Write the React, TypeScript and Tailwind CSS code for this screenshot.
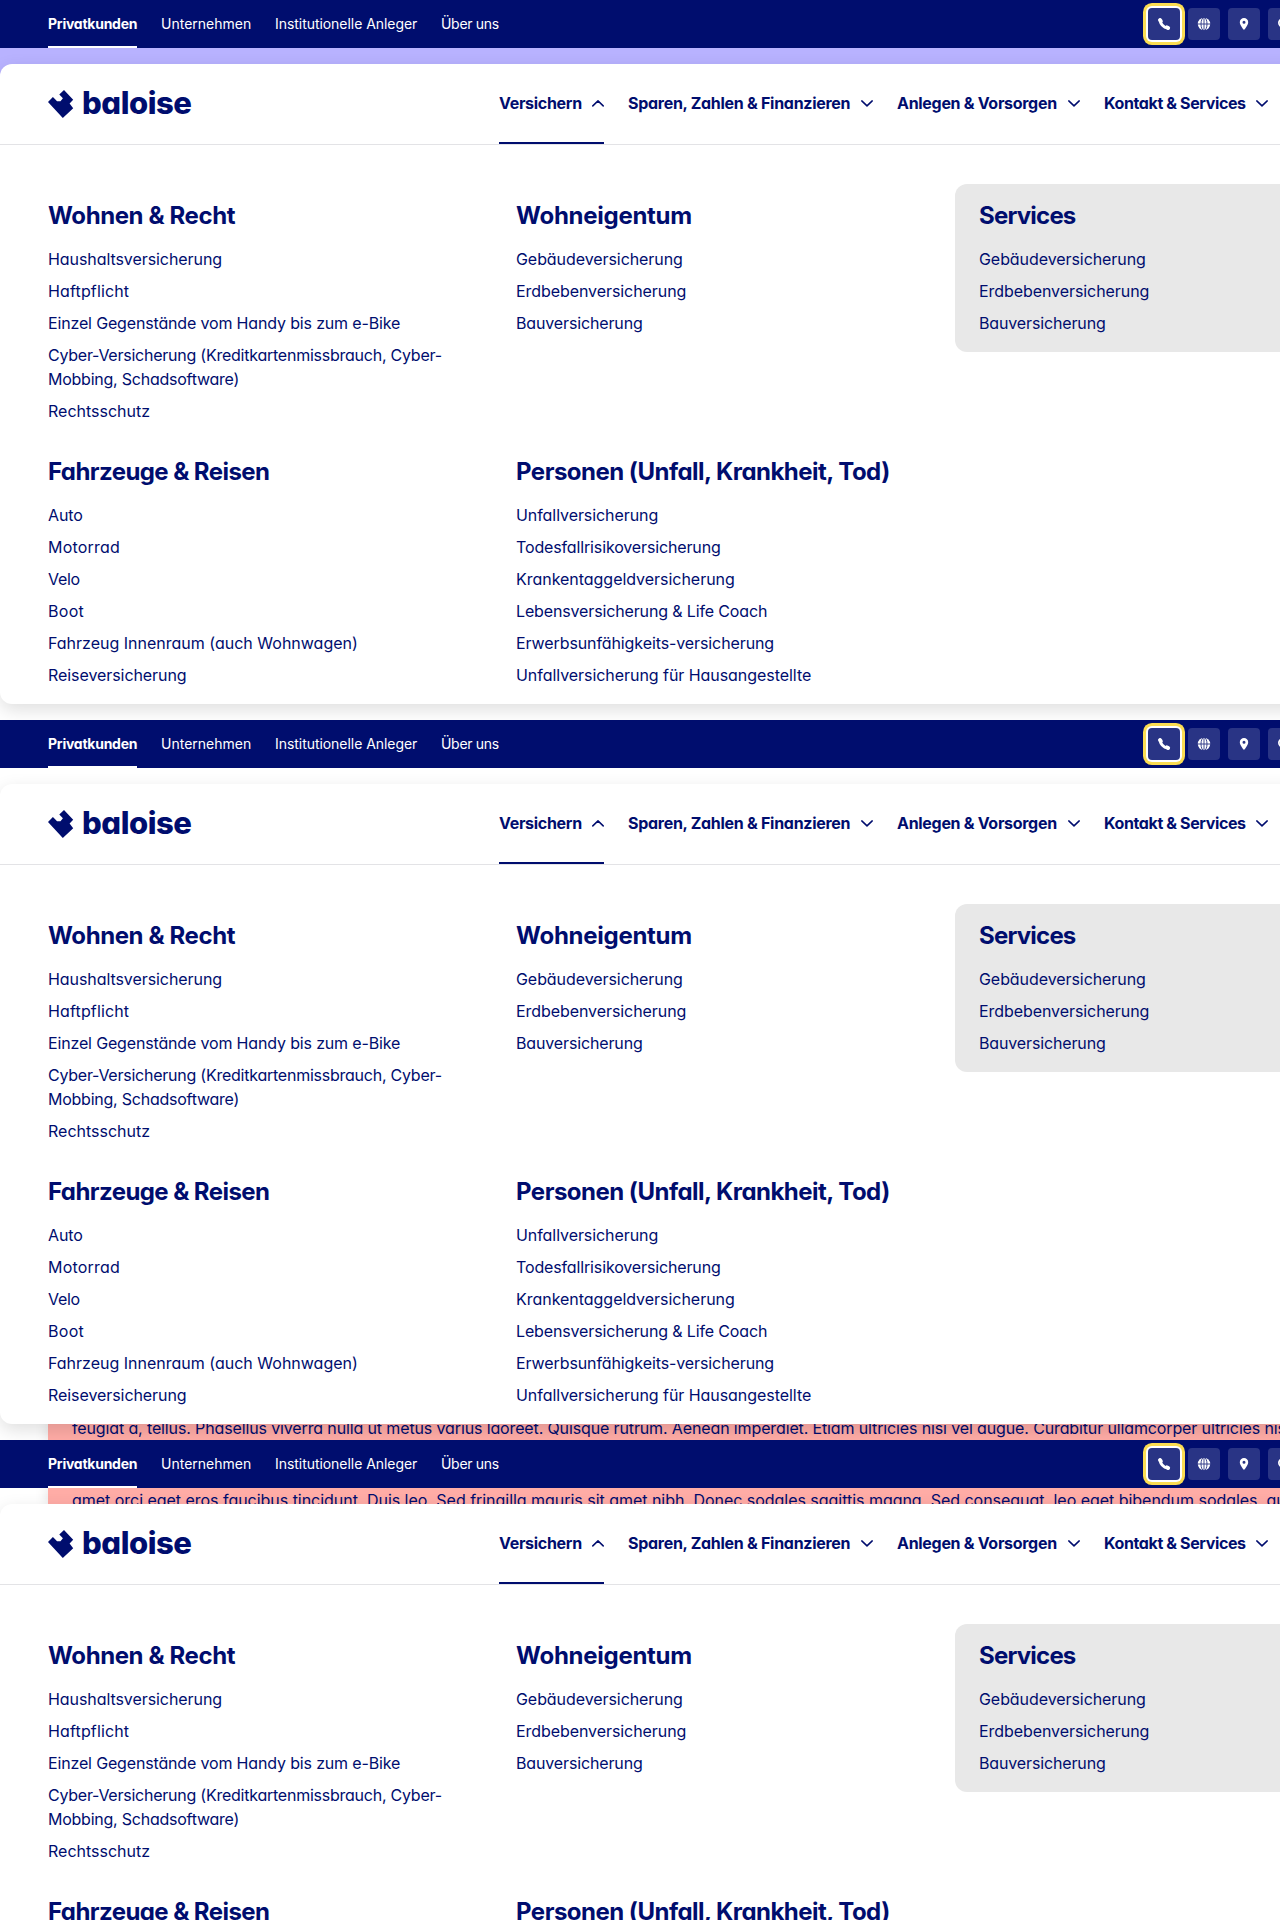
import React from "react";

type Link = { label: string; cls?: string };
type Group = { title: string; titleCls: string; links: Link[] };

const leftGroups: Group[] = [
  {
    title: "Wohnen & Recht",
    titleCls: "tracking-[-0.4px]",
    links: [
      { label: "Haushaltsversicherung" },
      { label: "Haftpflicht", cls: "tracking-[0.15px]" },
      { label: "Einzel Gegenstände vom Handy bis zum e-Bike", cls: "tracking-[-0.16px]" },
      {
        label: "Cyber-Versicherung (Kreditkartenmissbrauch, Cyber-Mobbing, Schadsoftware)",
        cls: "tracking-[-0.24px]",
      },
      { label: "Rechtsschutz", cls: "tracking-normal" },
    ],
  },
  {
    title: "Fahrzeuge & Reisen",
    titleCls: "tracking-[-0.57px]",
    links: [
      { label: "Auto" },
      { label: "Motorrad", cls: "tracking-[0.2px]" },
      { label: "Velo", cls: "tracking-[-0.3px]" },
      { label: "Boot", cls: "tracking-[0.3px]" },
      { label: "Fahrzeug Innenraum (auch Wohnwagen)", cls: "tracking-normal" },
      { label: "Reiseversicherung" },
    ],
  },
];

const middleGroups: Group[] = [
  {
    title: "Wohneigentum",
    titleCls: "tracking-[-0.27px]",
    links: [
      { label: "Gebäudeversicherung" },
      { label: "Erdbebenversicherung" },
      { label: "Bauversicherung", cls: "tracking-[-0.14px]" },
    ],
  },
  {
    title: "Personen (Unfall, Krankheit, Tod)",
    titleCls: "tracking-[-0.51px]",
    links: [
      { label: "Unfallversicherung" },
      { label: "Todesfallrisikoversicherung", cls: "tracking-[-0.14px]" },
      { label: "Krankentaggeldversicherung", cls: "tracking-[-0.03px]" },
      { label: "Lebensversicherung & Life Coach", cls: "tracking-[-0.14px]" },
      { label: "Erwerbsunfähigkeits-versicherung", cls: "tracking-[-0.1px]" },
      { label: "Unfallversicherung für Hausangestellte", cls: "tracking-[-0.05px]" },
    ],
  },
];

const services: Group = {
  title: "Services",
  titleCls: "tracking-[-0.8px]",
  links: [
    { label: "Gebäudeversicherung" },
    { label: "Erdbebenversicherung" },
    { label: "Bauversicherung", cls: "tracking-[-0.14px]" },
  ],
};

const metaItems = [
  { label: "Privatkunden", cls: "w-[89px] font-bold tracking-[-0.25px] border-b-2 border-white pt-px" },
  { label: "Unternehmen", cls: "w-[90px] pb-px" },
  { label: "Institutionelle Anleger", cls: "w-[142px] pb-px tracking-[-0.05px]" },
  { label: "Über uns", cls: "w-[60px] pb-px tracking-[-0.3px]" },
];

const navItems = [
  { label: "Versichern", cls: "w-[105px] border-[#000d6e] tracking-[-0.3px]", open: true },
  { label: "Sparen, Zahlen & Finanzieren", cls: "w-[245px] border-transparent tracking-[-0.28px]", open: false },
  { label: "Anlegen & Vorsorgen", cls: "w-[183px] border-transparent tracking-[-0.3px]", open: false },
  { label: "Kontakt & Services", cls: "w-[164px] border-transparent tracking-[-0.38px]", open: false },
];

function Logo() {
  return (
    <div className="flex h-20 w-[150px] items-center">
      <svg className="h-[30px] w-[26px] shrink-0" viewBox="0 0 26 30" fill="#000d6e">
        <path d="M16 .9 25.200 10.700 21.600 14.500 25.200 19.200 14.800 28.900 0 13 4.900 8 9.100 12.300 12.500 12.300 14.900 9.300 11.300 5.600Z" />
      </svg>
      <span className="mb-[3px] ml-[8px] text-[31px] leading-none font-extrabold tracking-[-0.45px]">baloise</span>
    </div>
  );
}

function Chevron({ up }: { up: boolean }) {
  return (
    <svg className="h-3 w-3 shrink-0" viewBox="0 0 12 12" fill="none" stroke="#000d6e" strokeWidth="1.5" strokeLinecap="round" strokeLinejoin="round">
      <path d={up ? "M.8 8.900 6 3.900 11.200 8.900" : "M.8 3.900 6 8.900 11.200 3.900"} />
    </svg>
  );
}

function IconButton({ focused, children }: { focused?: boolean; children: React.ReactNode }) {
  return (
    <div
      className={
        focused
          ? "flex size-8 shrink-0 items-center justify-center rounded-[4px] bg-[#293485] shadow-[0_0_0_2px_#fff,0_0_0_5px_#fbdc52]"
          : "flex size-8 shrink-0 items-center justify-center rounded-[4px] bg-[#293485]"
      }
    >
      <svg className="size-4" viewBox="0 0 16 16" fill="#fff">
        {children}
      </svg>
    </div>
  );
}

function TopBar() {
  return (
    <div className="relative z-20 flex h-12 shrink-0 justify-between overflow-hidden bg-[#000d6e] pl-12 text-white">
      <div className="flex gap-6">
        {metaItems.map((m) => (
          <div key={m.label} className={`flex h-12 items-center text-[14px] whitespace-nowrap ${m.cls}`}>
            <span>{m.label}</span>
          </div>
        ))}
      </div>
      <div className="flex w-[132px] items-center gap-2">
        <IconButton focused>
          <g fill="none" stroke="#fff" strokeLinecap="round">
            <path d="M3.900 4C4.600 8.200 7.600 11.300 11.900 12.200" strokeWidth="2.800" />
            <path d="M4 4 4.900 5.200M11 11.300 12.200 12" strokeWidth="3.800" />
          </g>
        </IconButton>
        <IconButton>
          <circle cx="8" cy="8" r="6.200" />
          <g fill="none" stroke="#293485" strokeWidth="0.9">
            <ellipse cx="8" cy="8" rx="3" ry="6.600" />
            <path d="M8 1.500V14.500M1.500 8H14.500" />
          </g>
        </IconButton>
        <IconButton>
          <path fillRule="evenodd" d="M8 2a4.200 4.200 0 0 0-4.200 4.200C3.800 9.300 8 14 8 14s4.200-4.700 4.200-7.800A4.200 4.200 0 0 0 8 2Zm0 2.700a1.500 1.500 0 1 1 0 3 1.500 1.500 0 0 1 0-3Z" />
        </IconButton>
        <IconButton>
          <path fillRule="evenodd" d="M6.800 2a4.800 4.800 0 1 1 0 9.600 4.800 4.800 0 0 1 0-9.600Zm0 1.800a3 3 0 1 0 0 6 3 3 0 0 0 0-6Z" />
        </IconButton>
      </div>
    </div>
  );
}

function LinkGroup({ group }: { group: Group }) {
  return (
    <div className="py-4">
      <h3 className={`mb-[15px] text-[24px] leading-8 font-bold whitespace-nowrap ${group.titleCls}`}>{group.title}</h3>
      <ul className="mb-px flex flex-col gap-2">
        {group.links.map((l) => (
          <li key={l.label} className={`text-[16px] leading-6 ${l.cls ?? "tracking-[-0.07px]"}`}>
            {l.label}
          </li>
        ))}
      </ul>
    </div>
  );
}

function MegaHeader() {
  return (
    <div className="relative z-10 -mr-10 h-[640px] shrink-0 rounded-l-xl bg-white shadow-[0_6px_18px_rgba(0,0,0,0.13)]">
      <div className="flex h-[81px] justify-between overflow-hidden border-b border-[#e3e3e6] pr-10 pl-12">
        <Logo />
        <div className="flex w-[781px] gap-6">
          {navItems.map((n) => (
            <div
              key={n.label}
              className={`flex h-20 shrink-0 items-center justify-between border-b-2 text-[16px] font-bold whitespace-nowrap ${n.cls}`}
            >
              <span>{n.label}</span>
              <Chevron up={n.open} />
            </div>
          ))}
        </div>
      </div>
      <div className="flex items-start pt-[39px] pl-12">
        <div className="w-[468px] shrink-0 pr-14">
          <LinkGroup group={leftGroups[0]} />
          <LinkGroup group={leftGroups[1]} />
        </div>
        <div className="w-[439px] shrink-0">
          <div className="h-64">
            <LinkGroup group={middleGroups[0]} />
          </div>
          <LinkGroup group={middleGroups[1]} />
        </div>
        <div className="grow rounded-l-xl bg-[#e8e8e8] pl-6">
          <LinkGroup group={services} />
        </div>
      </div>
    </div>
  );
}

function TextStrip({ text, className }: { text: string; className: string }) {
  return (
    <div className="h-4 shrink-0 overflow-hidden pl-12">
      <div className="h-4 bg-[#ffaca6] pl-6 shadow-[0_0_14px_rgba(0,0,0,0.15)]">
        <p className={`text-[16px] leading-6 whitespace-nowrap ${className}`}>{text}</p>
      </div>
    </div>
  );
}

export default function App() {
  return (
    <div className="h-[1920px] w-[1280px] overflow-hidden bg-white font-['Inter',sans-serif] text-[#000d6e] [font-feature-settings:'cv11']">
      <div className="flex h-[720px] flex-col overflow-hidden">
        <TopBar />
        <div className="-mb-4 h-8 shrink-0 bg-[#b8b2ff]" />
        <MegaHeader />
      </div>
      <div className="flex h-[720px] flex-col overflow-hidden">
        <TopBar />
        <div className="h-4 shrink-0" />
        <MegaHeader />
        <TextStrip
          className="-translate-y-2 tracking-[-0.13px]"
          text="feugiat a, tellus. Phasellus viverra nulla ut metus varius laoreet. Quisque rutrum. Aenean imperdiet. Etiam ultricies nisi vel augue. Curabitur ullamcorper ultricies nisi."
        />
      </div>
      <div className="flex h-[480px] flex-col overflow-hidden">
        <TopBar />
        <TextStrip
          className="tracking-[-0.03px]"
          text="amet orci eget eros faucibus tincidunt. Duis leo. Sed fringilla mauris sit amet nibh. Donec sodales sagittis magna. Sed consequat, leo eget bibendum sodales, augue velit."
        />
        <MegaHeader />
      </div>
    </div>
  );
}
